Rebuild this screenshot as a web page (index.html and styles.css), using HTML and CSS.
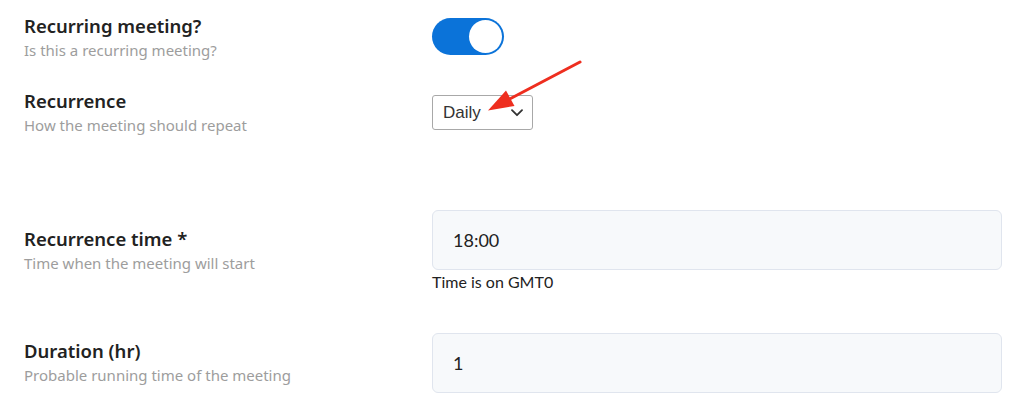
FILE: index.html
```html
<!DOCTYPE html>
<html lang="en">
<head>
<meta charset="utf-8">
<title>Recurring meeting</title>
<link rel="stylesheet" href="styles.css">
</head>
<body>
<form class="form">
  <div class="row row-recurring">
    <div class="label">
      <div class="title">Recurring meeting?</div>
      <div class="sub">Is this a recurring meeting?</div>
    </div>
    <div class="control">
      <span class="toggle"><span class="knob"></span></span>
    </div>
  </div>
  <div class="row row-recurrence">
    <div class="label">
      <div class="title">Recurrence</div>
      <div class="sub">How the meeting should repeat</div>
    </div>
    <div class="control">
      <div class="select">
        <span class="select-value">Daily</span>
        <svg class="chevron" width="12" height="8" viewBox="0 0 12 8"><path d="M1 1.2 L6 6.2 L11 1.2" fill="none" stroke="#333" stroke-width="1.8" stroke-linecap="round" stroke-linejoin="round"/></svg>
      </div>
    </div>
  </div>
  <div class="row row-time">
    <div class="label">
      <div class="title">Recurrence time *</div>
      <div class="sub">Time when the meeting will start</div>
    </div>
    <div class="control">
      <div class="input">18:00</div>
      <div class="helper">Time is on GMT0</div>
    </div>
  </div>
  <div class="row row-duration">
    <div class="label">
      <div class="title">Duration (hr)</div>
      <div class="sub">Probable running time of the meeting</div>
    </div>
    <div class="control">
      <div class="input">1</div>
    </div>
  </div>
</form>
<svg class="annotation" width="1024" height="417" viewBox="0 0 1024 417">
  <line x1="580" y1="62" x2="505" y2="101.5" stroke="#ee2e1f" stroke-width="3" stroke-linecap="round"/>
  <polygon points="488,110.5 514.5,106 506,90.5" fill="#ee2e1f"/>
</svg>
</body>
</html>
```
FILE: styles.css
```css
html, body {
  margin: 0;
  padding: 0;
  background: #ffffff;
}
body {
  width: 1024px;
  height: 417px;
  overflow: hidden;
  position: relative;
}
.form {
  padding: 13px 22px 0 24px;
  display: flex;
  flex-direction: column;
}
.row {
  display: grid;
  grid-template-columns: 408px 570px;
  align-items: start;
}
.row-recurring .control { margin-top: 5px; }
.row-recurrence .control { margin-top: 7px; }
.row-recurrence { margin-top: 27px; }
.row-time { margin-top: 74px; }
.row-time .label { margin-top: 16px; }
.row-duration { margin-top: 41px; }
.row-duration .label { margin-top: 5px; }
.title {
  font-family: "Noto Sans", sans-serif;
  font-weight: 600;
  font-size: 18.5px;
  line-height: 26px;
  color: #222222;
}
.sub {
  font-family: "Noto Sans", sans-serif;
  font-size: 15px;
  line-height: 22px;
  color: #9d9d9d;
}
.toggle {
  display: flex;
  justify-content: flex-end;
  box-sizing: border-box;
  width: 72px;
  height: 37px;
  padding: 2px;
  border-radius: 19px;
  background: #0b73d9;
}
.knob {
  width: 33px;
  height: 33px;
  border-radius: 50%;
  background: #ffffff;
}
.select {
  display: inline-flex;
  align-items: center;
  justify-content: space-between;
  box-sizing: border-box;
  width: 101px;
  height: 35px;
  padding: 0 9px 0 10px;
  border: 1px solid #a8a8a8;
  border-radius: 3px;
  font-family: "Liberation Sans", sans-serif;
  font-size: 17px;
  color: #333333;
}
.input {
  box-sizing: border-box;
  height: 60px;
  padding: 0 20px;
  display: flex;
  align-items: center;
  background: #f7f9fb;
  border: 1px solid #e0e5ee;
  border-radius: 6px;
  font-family: Lato, sans-serif;
  font-size: 18px;
  color: #222222;
}
.helper {
  margin-top: 2px;
  font-family: Lato, sans-serif;
  font-size: 16px;
  line-height: 20px;
  color: #222222;
}
.annotation {
  position: absolute;
  left: 0;
  top: 0;
  pointer-events: none;
}
```
